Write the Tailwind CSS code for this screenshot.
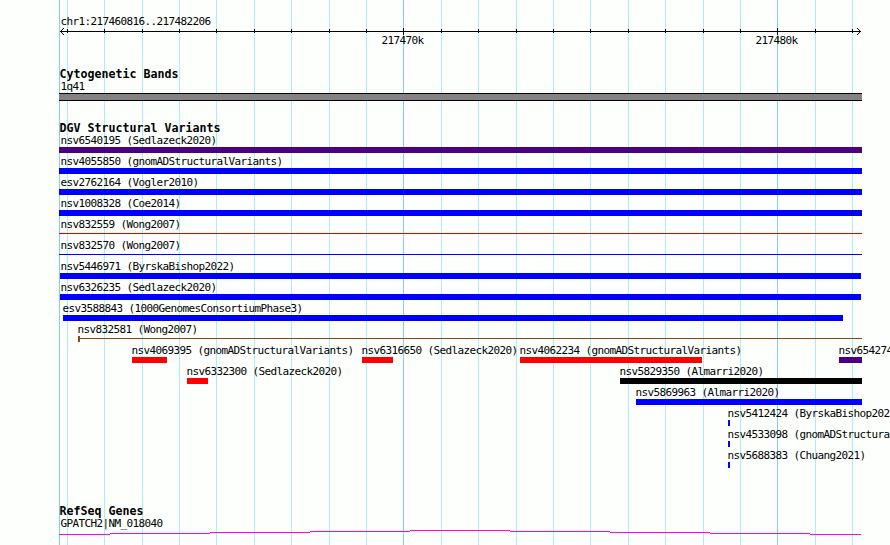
<!DOCTYPE html>
<html lang="en">
  <head>
    <meta charset="UTF-8" />
    <meta name="viewport" content="width=device-width, initial-scale=1.0" />
    <title>chr1:217460816..217482206</title>
    <script src="https://cdn.jsdelivr.net/npm/@tailwindcss/browser@4"></script>
  </head>
  <body
    class="bg-[#fcfffc] text-black font-['DejaVu_Sans_Mono',monospace] text-[11px] leading-[13px] tracking-[-0.622px] whitespace-nowrap overflow-hidden"
  >
    <div class="relative w-[890px] h-[545px] overflow-hidden">
      <!-- Grid lines -->
      <svg
        id="grid"
        class="absolute inset-0"
        width="890"
        height="545"
        shape-rendering="crispEdges"
      ></svg>

      <main class="relative flex flex-col pt-[15px]">
        <!-- Ruler -->
        <header class="h-[52px]">
          <h1 class="pl-[60.5px] h-[13px]">chr1:217460816..217482206</h1>
          <svg
            id="ruler"
            class="block"
            width="890"
            height="7"
            shape-rendering="crispEdges"
          ></svg>
          <div class="flex pl-[381.5px] -mt-px">
            <span class="w-[374px]">217470k</span>
            <span>217480k</span>
          </div>
        </header>

        <!-- Cytogenetic Bands -->
        <section class="h-[54px]">
          <h2
            class="pl-[59.5px] h-[13px] text-[11.63px] leading-[15px] font-bold tracking-normal"
          >
            Cytogenetic Bands
          </h2>
          <div class="pl-[60.5px] h-[13px]">1q41</div>
          <div
            class="ml-[59px] w-[803px] h-2 bg-[#848284] border-y border-black"
          ></div>
        </section>

        <!-- DGV Structural Variants -->
        <section class="h-[383px]">
          <h2
            class="pl-[59.5px] h-[13px] text-[11.63px] leading-[15px] font-bold tracking-normal"
          >
            DGV Structural Variants
          </h2>
          <div id="variants"></div>
        </section>

        <!-- RefSeq Genes -->
        <section>
          <h2
            class="pl-[59.5px] h-[13px] text-[11.63px] leading-[15px] font-bold tracking-normal"
          >
            RefSeq Genes
          </h2>
          <div class="pl-[60.5px] h-[13px]">GPATCH2|NM_018040</div>
          <svg
            class="block"
            width="890"
            height="5"
            fill="#ff00ff"
            shape-rendering="crispEdges"
          >
            <path
              d="M59 4h51v1h-51zM110 3h100v1h-100zM210 2h100v1h-100zM310 1h100v1h-100zM410 0h100v1h-100zM510 1h100v1h-100zM610 2h100v1h-100zM710 3h100v1h-100zM810 4h51v1h-51z"
            />
          </svg>
        </section>
      </main>
    </div>

    <script>
      const minor = [
        67, 104, 142, 179, 216, 254, 291, 329, 366, 441, 478, 516, 553, 590,
        628, 665, 703, 740, 815, 852,
      ];
      const major = [403, 777];

      // [label, start, end, color, style, label offset]
      const rows = [
        [["nsv6540195 (Sedlazeck2020)", 59, 862, "#4b0082", "bar", 60.5]],
        [["nsv4055850 (gnomADStructuralVariants)", 59, 862, "#0000ff", "bar", 60.5]],
        [["esv2762164 (Vogler2010)", 59, 862, "#0000ff", "bar", 60.5]],
        [["nsv1008328 (Coe2014)", 59, 862, "#0000ff", "bar", 60.5]],
        [["nsv832559 (Wong2007)", 59, 862, "#e00000", "line", 60.5]],
        [["nsv832570 (Wong2007)", 59, 862, "#0000ff", "line", 60.5]],
        [["nsv5446971 (ByrskaBishop2022)", 60, 861, "#0000ff", "bar", 60.5]],
        [["nsv6326235 (Sedlazeck2020)", 60, 861, "#0000ff", "bar", 60.5]],
        [["esv3588843 (1000GenomesConsortiumPhase3)", 63, 843, "#0000ff", "bar", 62.5]],
        [["nsv832581 (Wong2007)", 78, 862, "#8b4513", "range", 77.5]],
        [
          ["nsv4069395 (gnomADStructuralVariants)", 132, 167, "#ff0000", "bar", 131.5],
          ["nsv6316650 (Sedlazeck2020)", 362, 393, "#ff0000", "bar", 361.5],
          ["nsv4062234 (gnomADStructuralVariants)", 520, 702, "#ff0000", "bar", 519.5],
          ["nsv6542748 (Sedlazeck2020)", 839, 862, "#4b0082", "bar", 838.5],
        ],
        [
          ["nsv6332300 (Sedlazeck2020)", 187, 208, "#ff0000", "bar", 186.5],
          ["nsv5829350 (Almarri2020)", 620, 862, "#000000", "bar", 619.5],
        ],
        [["nsv5869963 (Almarri2020)", 636, 862, "#0000ff", "bar", 635.5]],
        [["nsv5412424 (ByrskaBishop2022)", 728, 730, "#0000ff", "bar", 727.5]],
        [["nsv4533098 (gnomADStructuralVariants)", 728, 730, "#0000ff", "bar", 727.5]],
        [["nsv5688383 (Chuang2021)", 728, 730, "#0000ff", "bar", 727.5]],
      ];

      function rect(x, y, w, h, fill) {
        return `<rect x="${x}" y="${y}" width="${w}" height="${h}" fill="${fill}"/>`;
      }

      function renderGlyph(start, end, color, style) {
        const w = end - start;
        if (style === "bar") return rect(start, 0, w, 6, color);
        let out = rect(start, 2, w, 1, color);
        if (style === "range") out += rect(start, 0, 2, 6, color);
        return out;
      }

      function renderRow(row) {
        const labels = row
          .map(([label, start, end, color, style, at], i) => {
            const next = row[i + 1] ? row[i + 1][5] : 890;
            const gap = i === 0 ? at : 0;
            return `<span class="shrink-0" style="margin-left:${gap}px;width:${next - at}px">${label}</span>`;
          })
          .join("");
        const glyphs = row.map((f) => renderGlyph(f[1], f[2], f[3], f[4])).join("");
        return `<div class="h-[21px]">
          <div class="flex h-[13px]">${labels}</div>
          <svg class="block" width="890" height="6" shape-rendering="crispEdges">${glyphs}</svg>
        </div>`;
      }

      document.getElementById("grid").innerHTML =
        minor.map((x) => rect(x, 0, 1, 545, "#afeeee")).join("") +
        [59, ...major].map((x) => rect(x, 0, 1, 545, "#87ceeb")).join("");

      document.getElementById("ruler").innerHTML =
        rect(60, 3, 801, 1, "#000") +
        minor.map((x) => rect(x, 1, 1, 4, "#000")).join("") +
        major.map((x) => rect(x, 0, 1, 7, "#000")).join("") +
        [1, 2, 3]
          .map(
            (d) =>
              rect(60 + d, 3 - d, 1, 1, "#000") +
              rect(60 + d, 3 + d, 1, 1, "#000") +
              rect(860 - d, 3 - d, 1, 1, "#000") +
              rect(860 - d, 3 + d, 1, 1, "#000")
          )
          .join("");

      document.getElementById("variants").innerHTML = rows
        .map(renderRow)
        .join("");
    </script>
  </body>
</html>
